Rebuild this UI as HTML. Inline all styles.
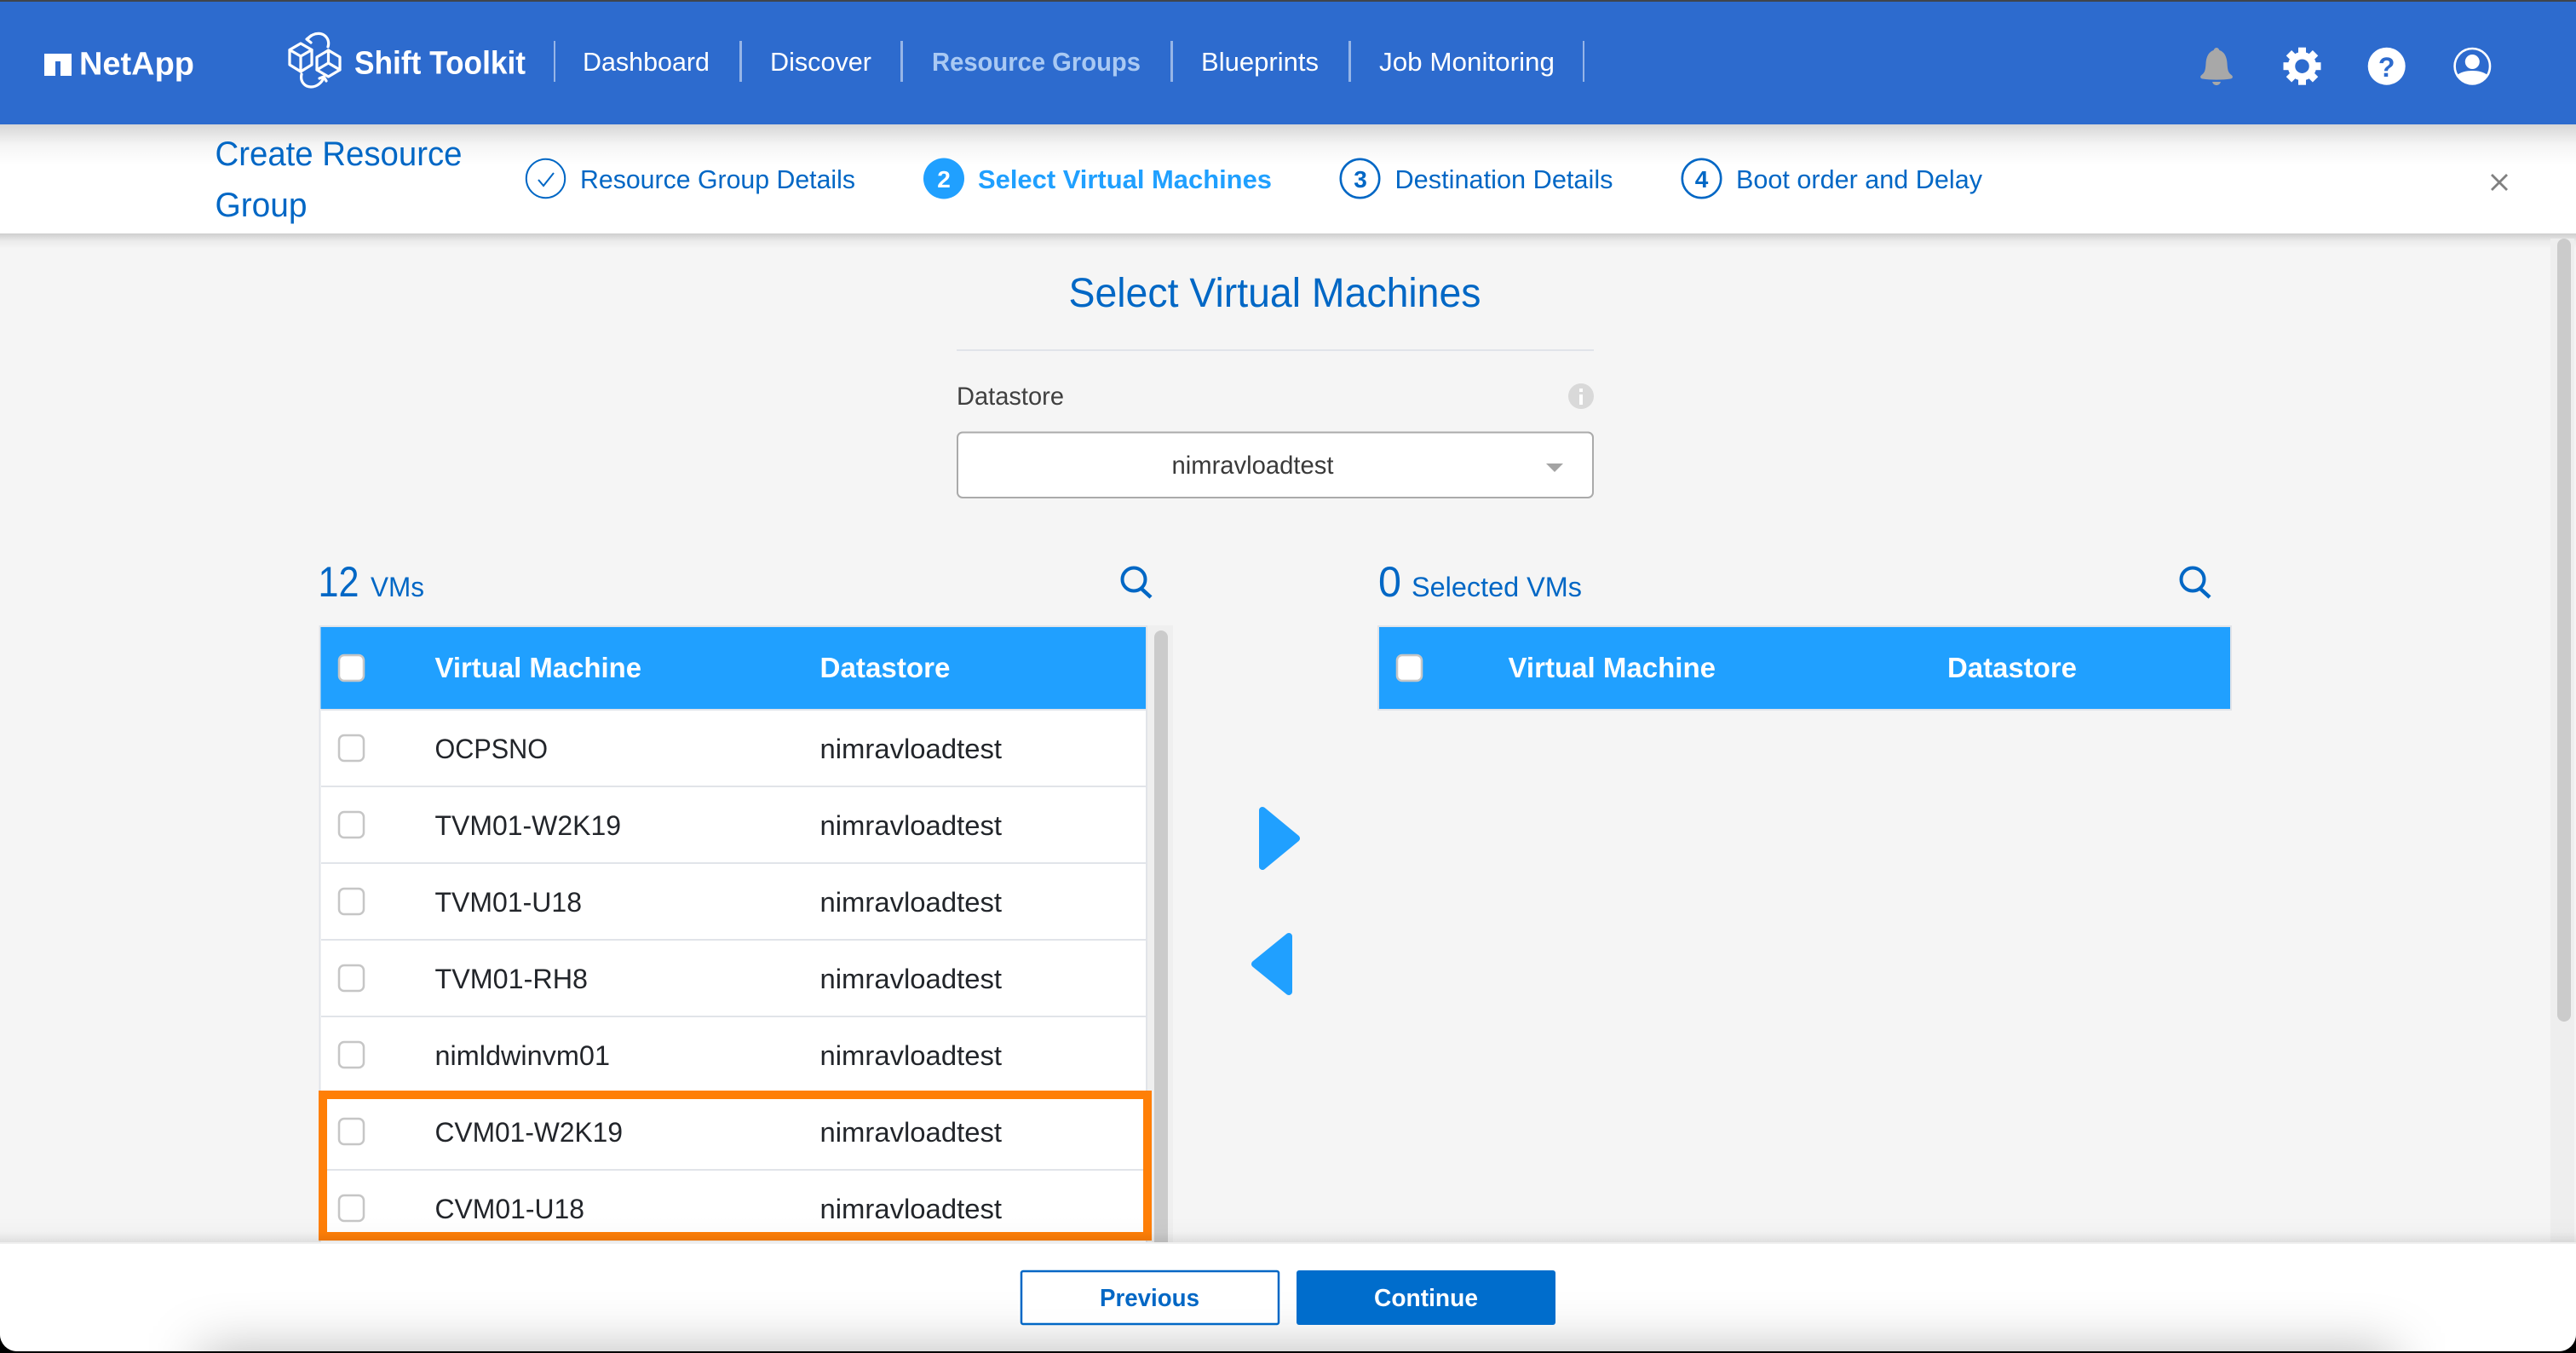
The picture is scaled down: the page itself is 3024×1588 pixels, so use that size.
<!DOCTYPE html>
<html lang="en">
<head>
<meta charset="utf-8">
<title>Shift Toolkit - Create Resource Group</title>
<style>
html,body{margin:0;padding:0;width:3024px;height:1588px;overflow:hidden;background:#000}
svg{display:block;position:absolute;left:0;top:0}
text{font-family:"Liberation Sans",sans-serif;white-space:pre}
.nav{font-size:31px;fill:#fff}
.step{font-size:31px;fill:#0067c5}
.row{font-size:32.5px;fill:#22252a}
.th{font-size:33px;font-weight:bold;fill:#fff}
.cb{fill:#fff;stroke:#c6c6c6;stroke-width:2.5}
.line{fill:#e1e4e9}
</style>
</head>
<body>
<svg width="3024" height="1588" viewBox="0 0 3024 1588" xmlns="http://www.w3.org/2000/svg">
<defs>
<linearGradient id="s1" x1="0" y1="0" x2="0" y2="1"><stop offset="0" stop-color="#000" stop-opacity=".16"/><stop offset=".5" stop-color="#000" stop-opacity=".04"/><stop offset="1" stop-color="#000" stop-opacity="0"/></linearGradient>
<linearGradient id="s2" x1="0" y1="0" x2="0" y2="1"><stop offset="0" stop-color="#000" stop-opacity="0"/><stop offset=".6" stop-color="#000" stop-opacity=".015"/><stop offset="1" stop-color="#000" stop-opacity=".09"/></linearGradient>
<filter id="blur" x="-10%" y="-300%" width="120%" height="700%"><feGaussianBlur stdDeviation="32"/></filter>
<clipPath id="frame"><path d="M0 0H3024V1566a20 20 0 0 1-20 20H20a20 20 0 0 1-20-20Z"/></clipPath>
</defs>
<rect width="3024" height="1588" fill="#000"/>
<g clip-path="url(#frame)">
<rect width="3024" height="1588" fill="#f5f5f5"/>

<!-- sub header -->
<rect x="0" y="146" width="3024" height="128" fill="#fff"/>
<rect x="0" y="146" width="3024" height="48" fill="url(#s1)"/>
<rect x="0" y="274" width="3024" height="18" fill="url(#s1)"/>

<!-- top bar -->
<rect x="0" y="0" width="3024" height="146" fill="#2d6bce"/>
<rect x="0" y="0" width="3024" height="2" fill="#3f444c"/>

<!-- NetApp logo -->
<path d="M52 63H84V89H71V72H65V89H52Z" fill="#fff"/>
<text x="93" y="87.500" font-size="38" font-weight="bold" fill="#fff" textLength="135" lengthAdjust="spacingAndGlyphs">NetApp</text>

<!-- Shift logo -->
<g fill="none" stroke="#fff" stroke-width="3.200" stroke-linejoin="round" stroke-linecap="round">
<path d="M353 51L366 58.500V76L353 84L340 76V58.500Z"/>
<path d="M340 58.500L353 66L366 58.500M353 66V84"/>
<path d="M385.500 59L399 67V82L385.500 90L372 82V67Z"/>
<path d="M372 82L385.500 74L399 82M385.500 74V59"/>
<path d="M361 46C368 37 381 37 385 47C386 50 386 52 385 55"/>
<path d="M365 42L360 46L365 50"/>
<path d="M354 87C352 96 358 102 365 102C372 102 378 97 380 91"/>
<path d="M375 92L380 90L383 95"/>
</g>
<text x="416" y="86.500" font-size="38" font-weight="bold" fill="#fff" textLength="201" lengthAdjust="spacingAndGlyphs">Shift Toolkit</text>

<!-- nav -->
<g fill="#fff" fill-opacity=".5">
<rect x="650" y="48" width="2" height="48"/>
<rect x="868" y="48" width="3" height="48"/>
<rect x="1057" y="48" width="3" height="48"/>
<rect x="1374" y="48" width="3" height="48"/>
<rect x="1583" y="48" width="3" height="48"/>
<rect x="1858" y="48" width="2" height="48"/>
</g>
<text class="nav" x="684" y="83" textLength="149" lengthAdjust="spacingAndGlyphs">Dashboard</text>
<text class="nav" x="904" y="83" textLength="119" lengthAdjust="spacingAndGlyphs">Discover</text>
<text class="nav" x="1094" y="83" textLength="245" lengthAdjust="spacingAndGlyphs" style="fill:#a9c9f3;font-weight:bold">Resource Groups</text>
<text class="nav" x="1410" y="83" textLength="138" lengthAdjust="spacingAndGlyphs">Blueprints</text>
<text class="nav" x="1619" y="83" textLength="206" lengthAdjust="spacingAndGlyphs">Job Monitoring</text>

<!-- header icons -->
<path d="M2602 56c2 0 3 2 3.500 3c6 2 8.500 8 9 15c.5 8 1 11 5 14c2 1.500 2 4-1 4.500c-10 1.500-23 1.500-33 0c-3-.5-3-3-1-4.500c4-3 4.500-6 5-14c.5-7 3-13 9-15c.5-1 1.500-3 3.500-3zM2597 96h10c-1 3-3 4-5 4s-4-1-5-4z" fill="#a8a8a8"/>
<g fill="#fff">
<circle cx="2702.500" cy="77.700" r="12.500" fill="none" stroke="#fff" stroke-width="8.500"/>
<g transform="translate(2702.500 77.700)">
<rect x="-4.500" y="-22" width="9" height="9"/>
<rect x="-4.500" y="-22" width="9" height="9" transform="rotate(45)"/>
<rect x="-4.500" y="-22" width="9" height="9" transform="rotate(90)"/>
<rect x="-4.500" y="-22" width="9" height="9" transform="rotate(135)"/>
<rect x="-4.500" y="-22" width="9" height="9" transform="rotate(180)"/>
<rect x="-4.500" y="-22" width="9" height="9" transform="rotate(225)"/>
<rect x="-4.500" y="-22" width="9" height="9" transform="rotate(270)"/>
<rect x="-4.500" y="-22" width="9" height="9" transform="rotate(315)"/>
</g>
<circle cx="2801.700" cy="77.700" r="22"/>
<circle cx="2902.300" cy="72.500" r="8.500"/>
<path d="M2884 88.500C2888 84.500 2896 83 2902.300 83S2916.500 84.500 2920.500 88.500A21 21 0 0 1 2884 88.500Z"/>
</g>
<text x="2801.700" y="90" font-size="32" font-weight="bold" text-anchor="middle" fill="#2d6bce">?</text>
<circle cx="2902.300" cy="77.700" r="20.700" fill="none" stroke="#fff" stroke-width="2.600"/>

<!-- create title + steps -->
<text x="252.500" y="194" font-size="40" fill="#0067c5" textLength="290" lengthAdjust="spacingAndGlyphs">Create Resource</text>
<text x="252.500" y="254" font-size="40" fill="#0067c5" textLength="108" lengthAdjust="spacingAndGlyphs">Group</text>

<circle cx="640.500" cy="209.500" r="22.700" fill="none" stroke="#0067c5" stroke-width="2"/>
<path d="M632 211L638 218L650 203" fill="none" stroke="#0067c5" stroke-width="2"/>
<text class="step" x="681" y="221" textLength="323" lengthAdjust="spacingAndGlyphs">Resource Group Details</text>

<circle cx="1108" cy="209.500" r="24" fill="#20a0ff"/>
<text x="1108" y="220" font-size="28" font-weight="bold" fill="#fff" text-anchor="middle">2</text>
<text class="step" x="1148" y="221" textLength="345" lengthAdjust="spacingAndGlyphs" style="fill:#20a0ff;font-weight:bold">Select Virtual Machines</text>

<circle cx="1596.500" cy="209.500" r="22.700" fill="none" stroke="#0067c5" stroke-width="2.600"/>
<text x="1597" y="220" font-size="28" font-weight="bold" fill="#0067c5" text-anchor="middle">3</text>
<text class="step" x="1637.500" y="221" textLength="256" lengthAdjust="spacingAndGlyphs">Destination Details</text>

<circle cx="1997.500" cy="209.500" r="22.700" fill="none" stroke="#0067c5" stroke-width="2.600"/>
<text x="1997.500" y="220" font-size="28" font-weight="bold" fill="#0067c5" text-anchor="middle">4</text>
<text class="step" x="2038" y="221" textLength="289" lengthAdjust="spacingAndGlyphs">Boot order and Delay</text>

<path d="M2925 205L2943 223M2943 205L2925 223" stroke="#808080" stroke-width="2.800" fill="none"/>

<!-- page scrollbar -->
<rect x="2994" y="280" width="28" height="1178" fill="#eeeeee"/>
<rect x="3002" y="280" width="16" height="919" rx="8" fill="#cbcbcb"/>

<!-- title block -->
<text x="1254.500" y="360" font-size="48" fill="#0067c5" textLength="484" lengthAdjust="spacingAndGlyphs">Select Virtual Machines</text>
<rect x="1123" y="410" width="748" height="2" fill="#e1e4e9"/>
<text x="1123" y="475" font-size="30" fill="#404040" textLength="126" lengthAdjust="spacingAndGlyphs">Datastore</text>
<circle cx="1856" cy="465" r="15" fill="#d9d9d9"/>
<rect x="1854" y="463" width="4" height="12" fill="#fff"/>
<rect x="1854" y="456" width="4" height="4" fill="#fff"/>
<rect x="1124" y="507.500" width="746" height="76.500" rx="6" fill="#fff" stroke="#aaa" stroke-width="2"/>
<text x="1375.500" y="556" font-size="30" fill="#3a3a3a" textLength="190" lengthAdjust="spacingAndGlyphs">nimravloadtest</text>
<path d="M1815 544H1835L1825 554Z" fill="#a3a3a3"/>

<!-- left panel heading -->
<text x="373.500" y="700" font-size="50" fill="#0067c5" textLength="48" lengthAdjust="spacingAndGlyphs">12</text>
<text x="435" y="700" font-size="32" fill="#0067c5" textLength="63" lengthAdjust="spacingAndGlyphs">VMs</text>
<g fill="none" stroke="#0067c5" stroke-width="4"><circle cx="1331" cy="680" r="13.500"/><path d="M1340 691L1351 701" stroke-width="4.500"/></g>

<!-- left table -->
<rect x="1347" y="734" width="30" height="724" fill="#efefef"/>
<rect x="1355" y="740" width="16" height="740" rx="8" fill="#cbcbcb"/>
<rect x="374.500" y="734" width="972.500" height="724" fill="#e1e4e9"/>
<rect x="376.500" y="736" width="968.500" height="722" fill="#fff"/>
<rect x="376.500" y="736" width="968.500" height="96" fill="#20a0ff"/>
<rect x="398" y="769" width="29" height="30" rx="6" class="cb"/>
<text class="th" x="510.500" y="795" textLength="242.500" lengthAdjust="spacingAndGlyphs">Virtual Machine</text>
<text class="th" x="962.500" y="795" textLength="153" lengthAdjust="spacingAndGlyphs">Datastore</text>
<rect class="line" x="377" y="832" width="968" height="2"/>
<rect class="line" x="377" y="922" width="968" height="2"/>
<rect class="line" x="377" y="1012" width="968" height="2"/>
<rect class="line" x="377" y="1102" width="968" height="2"/>
<rect class="line" x="377" y="1192" width="968" height="2"/>
<rect class="line" x="377" y="1282" width="968" height="2"/>
<rect class="line" x="377" y="1372" width="968" height="2"/>

<rect class="cb" x="398" y="863" width="29" height="30" rx="6"/>
<rect class="cb" x="398" y="953" width="29" height="30" rx="6"/>
<rect class="cb" x="398" y="1043" width="29" height="30" rx="6"/>
<rect class="cb" x="398" y="1133" width="29" height="30" rx="6"/>
<rect class="cb" x="398" y="1223" width="29" height="30" rx="6"/>
<rect class="cb" x="398" y="1313" width="29" height="30" rx="6"/>
<rect class="cb" x="398" y="1403" width="29" height="30" rx="6"/>

<text class="row" x="510.500" y="890" textLength="132.500" lengthAdjust="spacingAndGlyphs">OCPSNO</text>
<text class="row" x="510.500" y="980" textLength="218.500" lengthAdjust="spacingAndGlyphs">TVM01-W2K19</text>
<text class="row" x="510.500" y="1070" textLength="172.500" lengthAdjust="spacingAndGlyphs">TVM01-U18</text>
<text class="row" x="510.500" y="1160" textLength="179.500" lengthAdjust="spacingAndGlyphs">TVM01-RH8</text>
<text class="row" x="510.500" y="1250" textLength="205.500" lengthAdjust="spacingAndGlyphs">nimldwinvm01</text>
<text class="row" x="510.500" y="1340" textLength="220.500" lengthAdjust="spacingAndGlyphs">CVM01-W2K19</text>
<text class="row" x="510.500" y="1430" textLength="175.500" lengthAdjust="spacingAndGlyphs">CVM01-U18</text>
<text class="row" x="962.500" y="890" textLength="213.500" lengthAdjust="spacingAndGlyphs">nimravloadtest</text>
<text class="row" x="962.500" y="980" textLength="213.500" lengthAdjust="spacingAndGlyphs">nimravloadtest</text>
<text class="row" x="962.500" y="1070" textLength="213.500" lengthAdjust="spacingAndGlyphs">nimravloadtest</text>
<text class="row" x="962.500" y="1160" textLength="213.500" lengthAdjust="spacingAndGlyphs">nimravloadtest</text>
<text class="row" x="962.500" y="1250" textLength="213.500" lengthAdjust="spacingAndGlyphs">nimravloadtest</text>
<text class="row" x="962.500" y="1340" textLength="213.500" lengthAdjust="spacingAndGlyphs">nimravloadtest</text>
<text class="row" x="962.500" y="1430" textLength="213.500" lengthAdjust="spacingAndGlyphs">nimravloadtest</text>

<!-- orange highlight -->
<rect x="379" y="1285" width="968" height="166" fill="none" stroke="#ff7f07" stroke-width="10"/>

<!-- arrows -->
<path d="M1482 951L1522 984L1482 1017Z" fill="#20a0ff" stroke="#20a0ff" stroke-width="8" stroke-linejoin="round"/>
<path d="M1513 1099L1473 1131.500L1513 1164Z" fill="#20a0ff" stroke="#20a0ff" stroke-width="8" stroke-linejoin="round"/>

<!-- right panel -->
<text x="1618" y="700" font-size="50" fill="#0067c5" textLength="27" lengthAdjust="spacingAndGlyphs">0</text>
<text x="1657" y="700" font-size="32" fill="#0067c5" textLength="200" lengthAdjust="spacingAndGlyphs">Selected VMs</text>
<g fill="none" stroke="#0067c5" stroke-width="4"><circle cx="2574" cy="680" r="13.500"/><path d="M2583 691L2594 701" stroke-width="4.500"/></g>
<rect x="1617" y="734" width="1003" height="100" fill="#e1e4e9"/>
<rect x="1619" y="736" width="999" height="96" fill="#20a0ff"/>
<rect class="cb" x="1640" y="769" width="29" height="30" rx="6"/>
<text class="th" x="1770.500" y="795" textLength="243.500" lengthAdjust="spacingAndGlyphs">Virtual Machine</text>
<text class="th" x="2286" y="795" textLength="152" lengthAdjust="spacingAndGlyphs">Datastore</text>

<!-- shadow above footer -->
<rect x="0" y="1428" width="3024" height="30" fill="url(#s2)"/>

<!-- footer -->
<rect x="0" y="1458" width="3024" height="130" fill="#fff"/>
<rect x="0" y="1458" width="3024" height="2" fill="#f0f0f0"/>
<g clip-path="url(#frame)">
<rect x="235" y="1586" width="2575" height="70" fill="#000" fill-opacity=".28" filter="url(#blur)"/>
</g>
<rect x="1199" y="1492" width="302" height="62" rx="2" fill="#fff" fill-opacity=".8" stroke="#0067c5" stroke-width="2.500"/>
<text x="1291" y="1533" font-size="29" font-weight="bold" fill="#0067c5" textLength="117" lengthAdjust="spacingAndGlyphs">Previous</text>
<rect x="1522" y="1491" width="304" height="64" rx="3" fill="#006dcc"/>
<text x="1613" y="1533" font-size="29" font-weight="bold" fill="#fff" textLength="122" lengthAdjust="spacingAndGlyphs">Continue</text>
</g>
</svg>
</body>
</html>
